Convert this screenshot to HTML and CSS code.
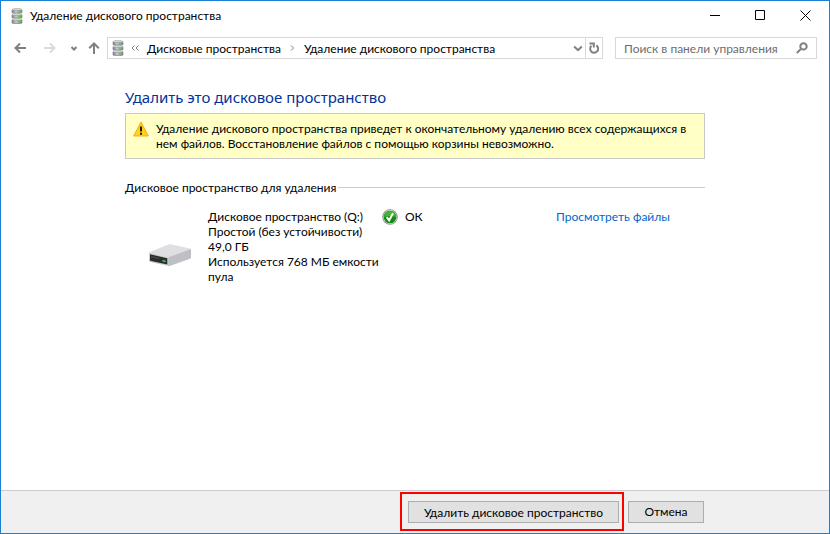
FILE: index.html
```html
<!DOCTYPE html>
<html lang="ru">
<head>
    <meta charset="UTF-8">
    <meta name="viewport" content="width=device-width, initial-scale=1.0">
    <title>Удаление дискового пространства</title>
    <link rel="stylesheet" href="styles.css">
</head>
<body>
    <svg class="defs" aria-hidden="true">
        <defs>
            <linearGradient id="metal" x1="0" x2="1" y1="0" y2="0">
                <stop offset="0" stop-color="#777b80"/>
                <stop offset="0.4" stop-color="#c6c9cf"/>
                <stop offset="1" stop-color="#777b80"/>
            </linearGradient>
            <symbol id="disks" viewBox="0 0 12 16">
                <g fill="url(#metal)" stroke="#777a80" stroke-width="0.6">
                    <path d="M1 11.8v2.7q0 1 1.5 1h7q1.5 0 1.5-1v-2.7z"/>
                    <path d="M1 6.8v2.4q0 1 1.5 1h7q1.5 0 1.5-1V6.8z"/>
                    <path d="M1 1.8v2.4q0 1 1.5 1h7q1.5 0 1.5-1V1.8z"/>
                </g>
                <g fill="#dcdee2" stroke="#94979c" stroke-width="0.5">
                    <path d="M2.5 10.6h7L11 12.3H1zM2.5 5.6h7L11 7.3H1zM2.5.6h7L11 2.3H1z"/>
                </g>
                <path fill="#4fe01c" d="M7 3.2h3v1.3H7zM7 8.2h3v1.3H7zM7 13.3h3v1.3H7z"/>
            </symbol>
        </defs>
    </svg>

    <div class="window">
        <header class="titlebar">
            <svg class="disks-icon" aria-hidden="true"><use href="#disks"/></svg>
            <span class="title">Удаление дискового пространства</span>
            <div class="window-buttons">
                <button type="button" aria-label="Свернуть">
                    <svg width="11" height="11" viewBox="0 0 11 11"><path d="M0 5.5h10"/></svg>
                </button>
                <button type="button" aria-label="Развернуть">
                    <svg width="11" height="11" viewBox="0 0 11 11"><path d="M0.5 0.5h9v9h-9z"/></svg>
                </button>
                <button type="button" aria-label="Закрыть">
                    <svg width="11" height="11" viewBox="0 0 11 11"><path d="M0.5 0.5l10 10M10.5 0.5l-10 10"/></svg>
                </button>
            </div>
        </header>

        <nav class="toolbar">
            <div class="history">
                <button type="button" aria-label="Назад">
                    <svg width="12" height="12" viewBox="0 0 12 12"><path d="M12 6H1.5M6 1.5L1.5 6 6 10.5"/></svg>
                </button>
                <button type="button" class="disabled" aria-label="Вперед" disabled>
                    <svg width="12" height="12" viewBox="0 0 12 12"><path d="M0 6h10.5M6 1.5L10.5 6 6 10.5"/></svg>
                </button>
                <button type="button" class="recent" aria-label="Последние расположения">
                    <svg width="6" height="5" viewBox="0 0 6 5"><path d="M0.5 1L3 3.5 5.5 1"/></svg>
                </button>
                <button type="button" aria-label="Вверх">
                    <svg width="12" height="12" viewBox="0 0 12 12"><path d="M6 12V1.5M1.2 6.3L6 1.5l4.8 4.8"/></svg>
                </button>
            </div>
            <div class="address">
                <svg class="disks-icon" aria-hidden="true"><use href="#disks"/></svg>
                <button type="button" class="overflow" aria-label="Предыдущие папки">
                    <svg width="8" height="6" viewBox="0 0 8 6"><path d="M3.5 0.5L1 3l2.5 2.5M7.5 0.5L5 3l2.5 2.5"/></svg>
                </button>
                <a href="#">Дисковые пространства</a>
                <svg class="separator" width="5" height="8" viewBox="0 0 5 8" aria-hidden="true"><path d="M1 1.5L3.5 4 1 6.5"/></svg>
                <a href="#">Удаление дискового пространства</a>
                <button type="button" class="dropdown" aria-label="Показать список">
                    <svg width="10" height="7" viewBox="0 0 10 7"><path d="M1.2 1.5L5 5.2l3.8-3.7"/></svg>
                </button>
                <button type="button" class="refresh" aria-label="Обновить">
                    <svg width="10" height="12" viewBox="0 0 10 12"><path d="M2.4 3.8a4 4 0 1 0 5-.4M0.5 1.4h4.3v4"/></svg>
                </button>
            </div>
            <form class="search">
                <input type="search" placeholder="Поиск в панели управления" aria-label="Поиск в панели управления">
                <button type="submit" aria-label="Найти">
                    <svg width="12" height="12" viewBox="0 0 12 12"><circle cx="7.5" cy="4.4" r="3.2"/><path d="M5 6.9L0.8 11"/></svg>
                </button>
            </form>
        </nav>

        <main class="content">
            <h1>Удалить это дисковое пространство</h1>
            <div class="warning">
                <svg width="16" height="16" viewBox="0 0 16 16" aria-hidden="true">
                    <path fill="#ffd21c" stroke="#f5ad18" stroke-linejoin="round" d="M8 1l7.3 14H0.7z"/>
                    <path fill="#1d1a10" d="M7 5.5h2v5H7zM7 11.8h2v2H7z"/>
                </svg>
                <p>Удаление дискового пространства приведет к окончательному удалению всех содержащихся в нем файлов. Восстановление файлов с помощью корзины невозможно.</p>
            </div>

            <section>
                <h2>Дисковое пространство для удаления</h2>
                <div class="space">
                    <svg class="drive" width="44" height="24" viewBox="0 0 44 24" aria-hidden="true">
                        <path fill="#dfdfe1" d="M1 9.5L20.5 1.5q1.2-.5 2.4-.3L42 5.5q1 .4 1 1L20.5 15 1 10.5z"/>
                        <path fill="#bfc0c3" d="M20 14.5L43 6v8.5q0 .9-1 1.3l-19.6 7q-1.2.5-2.4.2z"/>
                        <path fill="#cdced0" d="M1 10l19.5 4.4V23L2 19q-1-.3-1-1.2z"/>
                        <path fill="#2b2d2e" d="M2 11.3l17.3 3.9v6.3L2 17.8z"/>
                        <path fill="#454849" d="M3 13l8 1.8v1.4L3 14.5z"/>
                        <path fill="#2fe03b" d="M14.5 17l3 .6v1.6l-3-.6z"/>
                    </svg>
                    <div class="details">
                        <div>Дисковое пространство (Q:)</div>
                        <div>Простой (без устойчивости)</div>
                        <div>49,0 ГБ</div>
                        <div>Используется 768 МБ емкости пула</div>
                    </div>
                    <div class="status">
                        <svg width="16" height="16" viewBox="0 0 16 16" aria-hidden="true">
                            <circle cx="8" cy="8" r="7.8" fill="#8f9590"/>
                            <circle cx="8" cy="8" r="6.9" fill="#d4d8d4"/>
                            <circle cx="8" cy="8" r="6.3" fill="#158a12"/>
                            <path fill="#43b534" d="M2 8a6 6 0 0 1 12 0q-6-2-12 0z"/>
                            <path fill="none" stroke="#fff" stroke-width="2" d="M4.7 8.2l2.4 3.2L11 4.2"/>
                        </svg>
                        <span>ОК</span>
                    </div>
                    <a href="#">Просмотреть файлы</a>
                </div>
            </section>
        </main>

        <footer class="actions">
            <div class="highlight">
                <button type="button" class="delete">Удалить дисковое пространство</button>
            </div>
            <button type="button" class="cancel">Отмена</button>
        </footer>
    </div>
</body>
</html>
```
FILE: styles.css
```css
* {
    box-sizing: border-box;
}

body {
    margin: 0;
    font-family: Lato, "Liberation Sans", sans-serif;
    font-size: 12px;
    line-height: 15px;
    color: #000;
}

h1, h2, p {
    margin: 0;
    font-weight: normal;
}

button, input {
    font: inherit;
    color: inherit;
}

svg {
    display: block;
    flex-shrink: 0;
}

.defs {
    position: absolute;
    width: 0;
    height: 0;
}

.window {
    display: flex;
    flex-direction: column;
    min-height: 100vh;
    border: 1px solid #1a80d4;
    background: #fff;
}

.disks-icon {
    width: 12px;
    height: 16px;
}

/* Title bar */
.titlebar {
    display: flex;
    align-items: center;
    height: 29px;
    padding: 0 1px 0 10px;
}

.title {
    margin-left: 7px;
}

.window-buttons {
    display: flex;
    margin-left: auto;
}

.window-buttons button {
    display: flex;
    align-items: center;
    justify-content: center;
    width: 45px;
    height: 29px;
    padding: 0;
    border: none;
    background: none;
}

.window-buttons path {
    fill: none;
    stroke: #000;
}

/* Navigation */
.toolbar {
    display: flex;
    align-items: center;
    padding: 7px 12px 0 13px;
}

.toolbar button {
    display: flex;
    align-items: center;
    justify-content: center;
    padding: 0;
    border: none;
    background: none;
}

.toolbar button svg, .separator {
    fill: none;
    stroke: #808080;
    stroke-width: 2;
}

.history {
    display: flex;
    align-items: center;
    gap: 18px;
    margin-right: 7px;
}

.history .disabled svg {
    stroke: #dadada;
}

.history .recent {
    margin: 0 -7px 0 -3px;
}

.toolbar .overflow svg {
    stroke-width: 1;
}

.separator {
    margin: 0 9px;
    stroke-width: 1;
}

.address {
    display: flex;
    flex: 1;
    align-items: center;
    height: 22px;
    padding-left: 4px;
    border: 1px solid #d9d9d9;
}

.address a {
    color: inherit;
    text-decoration: none;
    white-space: nowrap;
}

.address .overflow {
    margin: 0 8px 0 7px;
}

.address .dropdown {
    width: 14px;
    margin-left: auto;
}

.address .refresh {
    width: 17px;
    height: 20px;
    border-left: 1px solid #d9d9d9;
}

.search {
    display: flex;
    align-items: center;
    width: 202px;
    height: 22px;
    margin-left: 12px;
    padding: 0 8px;
    border: 1px solid #d9d9d9;
}

.search input {
    flex: 1;
    min-width: 0;
    padding: 0;
    border: none;
    outline: none;
    background: none;
}

.search input::placeholder {
    color: #6d6d6d;
}

/* Content */
.content {
    flex: 1;
    padding: 28px 124px 0;
}

h1 {
    font-family: "Noto Sans", sans-serif;
    font-size: 15px;
    line-height: 20px;
    color: #003399;
}

.warning {
    display: flex;
    gap: 7px;
    margin-top: 6px;
    padding: 7px;
    border: 1px solid #c8c8c8;
    background: #ffffc6;
}

h2 {
    display: flex;
    align-items: center;
    gap: 2px;
    margin-top: 21px;
    font-size: 12px;
}

h2::after {
    content: "";
    flex: 1;
    height: 1px;
    background: #ccc;
}

.space {
    display: grid;
    grid-template-columns: 60px 174px 174px 1fr;
    align-items: start;
    margin-top: 14px;
    padding-left: 23px;
}

.drive {
    align-self: center;
    margin-top: 16px;
}

.status {
    display: flex;
    gap: 7px;
}

.space a {
    color: #0066cc;
    text-decoration: none;
}

/* Footer */
.actions {
    display: flex;
    align-items: center;
    justify-content: flex-end;
    gap: 4px;
    padding: 1px 125px 2px;
    border-top: 1px solid #ccc;
    background: #f0f0f0;
}

.highlight {
    padding: 7px 3px 6px 6px;
    border: 2px solid #f00;
}

.actions button {
    display: block;
    height: 22px;
    padding: 0;
    border: 1px solid #adadad;
    border-radius: 0;
    background: #e1e1e1;
}

.actions .delete {
    width: 211px;
}

.actions .cancel {
    width: 76px;
}
```
